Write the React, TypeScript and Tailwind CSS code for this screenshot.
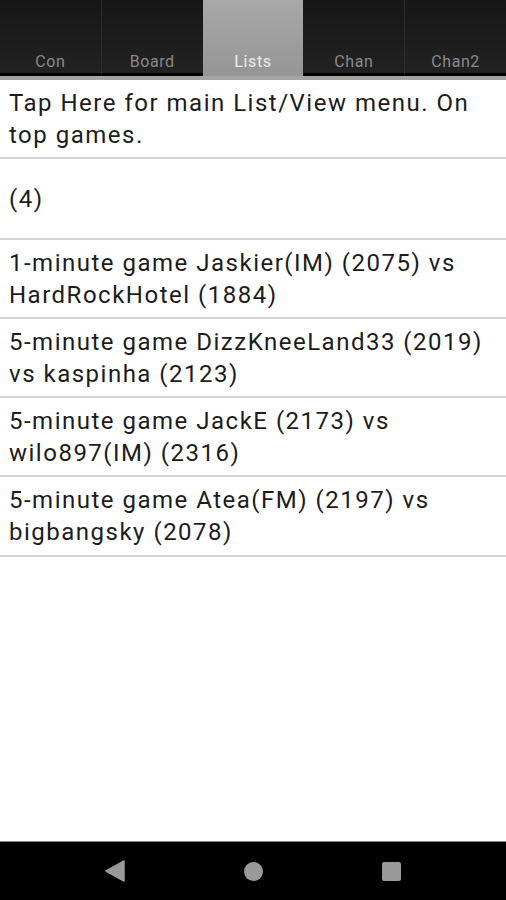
import React from 'react';

const tabs = ['Con', 'Board', 'Lists', 'Chan', 'Chan2'];

// row text + height (px, border included)
const rows: [string, string][] = [
  ['Tap Here for main List/View menu. On top games.', 'h-[79px]'],
  ['(4)', 'h-[81px]'],
  ['1-minute game Jaskier(IM) (2075) vs HardRockHotel (1884)', 'h-[79px]'],
  ['5-minute game DizzKneeLand33 (2019) vs kaspinha (2123)', 'h-[79px]'],
  ['5-minute game JackE (2173) vs wilo897(IM) (2316)', 'h-[79px]'],
  ['5-minute game Atea(FM) (2197) vs bigbangsky (2078)', 'h-[80px]'],
];

export default function App() {
  return (
    <div className="flex h-screen w-full flex-col bg-white font-['Roboto','Liberation_Sans',sans-serif]">
      {/* Tab bar */}
      <div className="flex h-[76px] bg-black">
        {tabs.map((t, i) =>
          t === 'Lists' ? (
            <div
              key={t}
              className="flex flex-1 items-end justify-center bg-gradient-to-b from-[#a8a8a8] to-[#959595] pb-[4px] text-[16px] leading-[20px] tracking-[0.6px] text-[#ececec]"
            >
              {t}
            </div>
          ) : (
            <div
              key={t}
              className={`flex flex-1 items-end justify-center border-b-[3px] border-black bg-gradient-to-b from-[#161616] to-[#222222] pb-[1px] text-[16px] leading-[20px] tracking-[0.6px] text-[#8a8a8a] ${
                i > 0 && tabs[i - 1] !== 'Lists' ? 'border-l border-l-[#2c2c2c]' : ''
              }`}
            >
              {t}
            </div>
          )
        )}
      </div>
      <div className="h-[4px] bg-[#a4a4a4]" />

      {/* List */}
      <div className="flex-1">
        {rows.map(([r, h], i) => (
          <div
            key={i}
            className={`flex items-center border-b-2 border-[#d4d4d4] px-[9px] text-[24px] leading-[32px] tracking-[1.5px] text-[#1c1c1c] ${h}`}
          >
            {r}
          </div>
        ))}
      </div>

      {/* Android nav bar */}
      <div className="h-[1px] bg-[#8c8c8c]" />
      <div className="flex h-[58px] items-center justify-center bg-black">
        <div className="flex w-[300px] items-center justify-between px-[2px]">
          <svg width="20" height="22" viewBox="0 0 20 22">
            <path d="M19 1 L19 21 L1 11 Z" fill="#999" stroke="#999" strokeLinejoin="round" strokeWidth="1.5" />
          </svg>
          <div className="h-[19px] w-[19px] rounded-full bg-[#999]" />
          <div className="h-[19px] w-[19px] rounded-[2px] bg-[#999]" />
        </div>
      </div>
    </div>
  );
}
